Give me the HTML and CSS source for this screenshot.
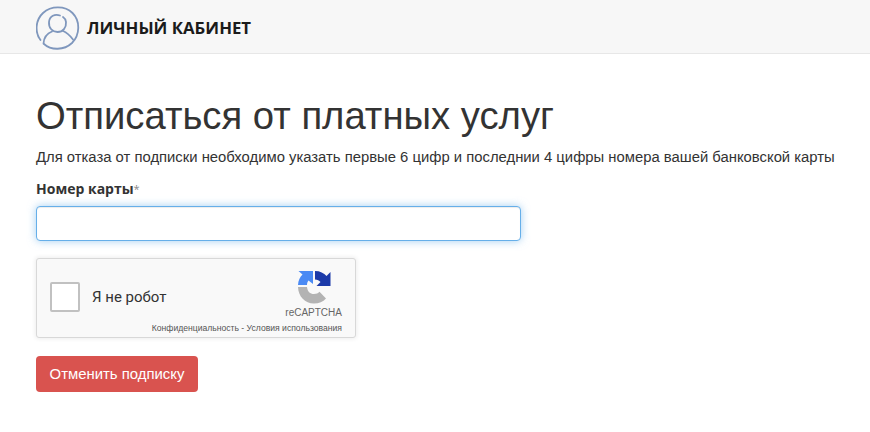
FILE: index.html
```html
<!DOCTYPE html>
<html lang="ru">
<head>
<meta charset="utf-8">
<title>Отписаться от платных услуг</title>
<link rel="stylesheet" href="styles.css">
</head>
<body>
<header class="topbar">
  <svg class="logo" width="44" height="46" viewBox="0 0 44 46" fill="none" stroke="#7f97bd" stroke-width="1.800" stroke-linecap="round">
    <path d="M4.500 35C-1.500 27 -.5 15 7 8 15 .5 29 .5 36.500 8 44.500 16 44 30 36 38 28 45.500 15 45.500 8 39"/>
    <path d="M24 10.500C19 8.500 13.500 11 13 17 12.500 23 16.500 27 21.500 27 27 27 30.500 22.500 30 17 29.700 14.500 28.500 13 27 12"/>
    <path d="M7.500 38.500C8 32 12 28 16 26.500"/>
    <path d="M27 26C31 27.500 34 30.500 37 34.500"/>
  </svg>
  <span class="brand">ЛИЧНЫЙ КАБИНЕТ</span>
</header>
<main class="content">
  <h1 class="title">Отписаться от платных услуг</h1>
  <p class="hint">Для отказа от подписки необходимо указать первые 6 цифр и последнии 4 цифры номера вашей банковской карты</p>
  <form class="form">
    <label class="label" for="card">Номер карты<span class="req">*</span></label>
    <input class="field" id="card" type="text">
    <div class="captcha">
      <span class="check"></span>
      <span class="robot">Я не робот</span>
      <div class="badge">
        <svg class="rc" width="34" height="34" viewBox="0 0 34 34">
          <path fill="#b3b3b3" d="M1 17H10C10.500 21.500 13 24 17 24 19.500 24 21 23.300 22.500 21.800L29 28.500C26 31.800 22 33.500 17 33.500 8 33.500 1.300 26.500 1 17Z"/>
          <path fill="#4a8af4" d="M1 15C1.200 10.500 3 7 5.500 4.500L1.500 1H16V14L11.500 10.500C10.500 11.800 10 13.300 10 15Z"/>
          <path fill="#1c3aa9" d="M18 1C23 1 27 3 29.500 6L33.500 2V16H19.500L23.500 12C22 10.500 20.500 9.500 18 9.500Z"/>
        </svg>
        <span class="rc-name">reCAPTCHA</span>
        <span class="rc-links">Конфиденциальность - Условия использования</span>
      </div>
    </div>
    <button class="btn" type="button">Отменить подписку</button>
  </form>
</main>
</body>
</html>
```
FILE: styles.css
```css
* { box-sizing: border-box; }
html, body { margin: 0; padding: 0; }
body {
  width: 870px;
  height: 432px;
  overflow: hidden;
  background: #fff;
  color: #333;
  font-family: "Open Sans", "Noto Sans", sans-serif;
}
.topbar {
  height: 54px;
  display: flex;
  align-items: flex-start;
  gap: 7px;
  padding: 5px 0 0 36px;
  background: #f7f7f7;
  border-bottom: 1px solid #e7e7e7;
}
.logo { flex: none; }
.brand {
  margin-top: 10px;
  font-size: 16.800px;
  line-height: 26px;
  font-weight: 700;
  color: #1b1b1b;
}
.content {
  padding: 0 36px;
  font-family: "Liberation Sans", Arial, sans-serif;
}
.title {
  margin: 42px 0 0;
  font-size: 38.250px;
  line-height: 40px;
  font-weight: 400;
  color: #333;
  white-space: nowrap;
}
.hint {
  margin: 11px 0 0;
  font-size: 14.830px;
  line-height: 20px;
  white-space: nowrap;
}
.form { display: flex; flex-direction: column; align-items: flex-start; }
.label {
  margin-top: 12px;
  font-family: "Open Sans", sans-serif;
  font-size: 14px;
  line-height: 20px;
  font-weight: 700;
}
.req { font-weight: 400; font-size: 11px; vertical-align: 1px; color: #888; }
.field {
  width: 485px;
  height: 35px;
  margin-top: 7px;
  border: 1px solid #66afe9;
  border-radius: 4px;
  outline: 0;
  background: #fff;
  box-shadow: inset 0 1px 1px rgba(0,0,0,.075), 0 0 8px rgba(102,175,233,.6);
}
.captcha {
  width: 320px;
  height: 80px;
  margin-top: 17px;
  display: flex;
  align-items: center;
  padding: 0 13px 2px;
  background: #f9f9f9;
  border: 1px solid #d8d8d8;
  border-radius: 3px;
  box-shadow: 0 0 4px 1px rgba(0,0,0,.07);
}
.check {
  width: 30px;
  height: 30px;
  flex: none;
  background: #fff;
  border: 2px solid #c1c1c1;
  border-radius: 2px;
}
.robot {
  flex: none;
  margin-left: 12px;
  font-family: Roboto, sans-serif;
  font-size: 15px;
  white-space: nowrap;
  color: #333;
}
.badge {
  flex: 1;
  min-width: 0;
  align-self: stretch;
  display: flex;
  flex-direction: column;
  align-items: flex-end;
  padding-top: 11px;
  font-family: "Liberation Sans", Arial, sans-serif;
  color: #666;
}
.rc { margin-right: 11px; flex: none; }
.rc-name { margin-top: 3px; font-size: 10px; line-height: 12px; }
.rc-links { margin-top: 3px; font-size: 8.600px; line-height: 12px; white-space: nowrap; color: #555; }
.btn {
  width: 162px;
  height: 36px;
  margin-top: 18px;
  padding: 0;
  border: 0;
  border-radius: 4px;
  background: #d9534f;
  color: #fff;
  font-family: "Liberation Sans", Arial, sans-serif;
  font-size: 14.900px;
}
```
